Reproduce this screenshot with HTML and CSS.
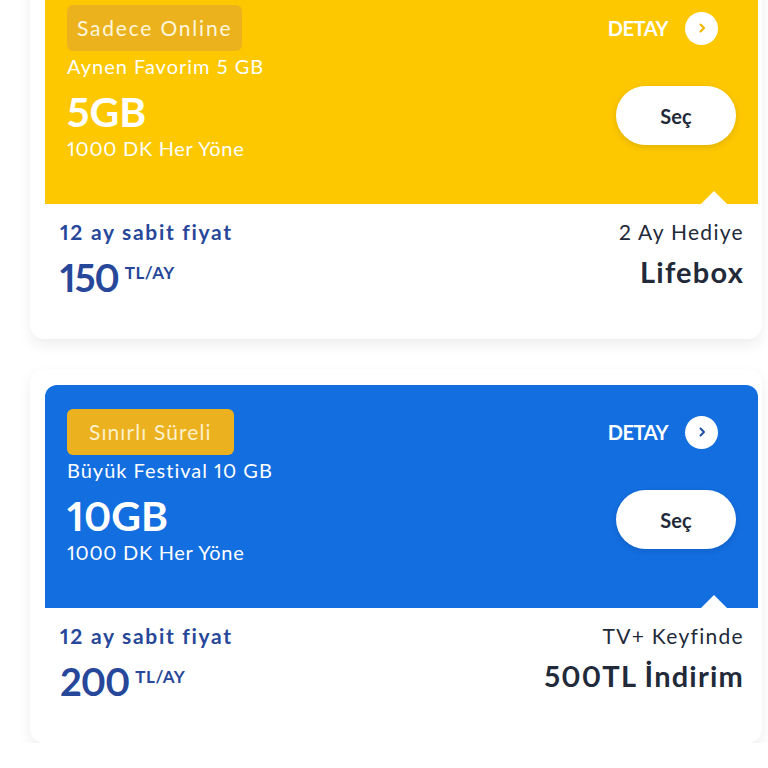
FILE: index.html
```html
<!DOCTYPE html>
<html lang="tr">
<head>
  <meta charset="UTF-8">
  <title>Paketler</title>
  <link rel="stylesheet" href="styles.css">
</head>
<body>

<div class="list">

  <div class="card">
    <div class="head yellow">
      <div class="info">
        <span class="badge">Sadece Online</span>
        <div class="name">Aynen Favorim 5 GB</div>
        <div class="gb">5GB</div>
        <div class="mins">1000 DK Her Yöne</div>
      </div>
      <div class="side">
        <a class="detay" href="#">DETAY
          <span class="circle">
            <svg width="10" height="12" viewBox="0 0 10 12"><path d="M3.5 2.5 L7 6 L3.5 9.5" fill="none" stroke="currentColor" stroke-width="2" stroke-linecap="round" stroke-linejoin="round"/></svg>
          </span>
        </a>
        <button class="sec" type="button">Seç</button>
      </div>
    </div>
    <div class="body">
      <div class="price">
        <div class="fixed">12 ay sabit fiyat</div>
        <div class="amount">150<span class="unit">TL/AY</span></div>
      </div>
      <div class="gift">
        <div class="gift-top">2 Ay Hediye</div>
        <div class="gift-main">Lifebox</div>
      </div>
    </div>
  </div>

  <div class="card">
    <div class="head blue">
      <div class="info">
        <span class="badge">Sınırlı Süreli</span>
        <div class="name">Büyük Festival 10 GB</div>
        <div class="gb">10GB</div>
        <div class="mins">1000 DK Her Yöne</div>
      </div>
      <div class="side">
        <a class="detay" href="#">DETAY
          <span class="circle">
            <svg width="10" height="12" viewBox="0 0 10 12"><path d="M3.5 2.5 L7 6 L3.5 9.5" fill="none" stroke="currentColor" stroke-width="2" stroke-linecap="round" stroke-linejoin="round"/></svg>
          </span>
        </a>
        <button class="sec" type="button">Seç</button>
      </div>
    </div>
    <div class="body">
      <div class="price">
        <div class="fixed">12 ay sabit fiyat</div>
        <div class="amount">200<span class="unit">TL/AY</span></div>
      </div>
      <div class="gift">
        <div class="gift-top">TV+ Keyfinde</div>
        <div class="gift-main">500TL İndirim</div>
      </div>
    </div>
  </div>

</div>

</body>
</html>
```

FILE: styles.css
```css
body {
  margin: 0;
  background: #ffffff;
  font-family: Lato, "Noto Sans", sans-serif;
  font-variant-numeric: proportional-nums;
  overflow: hidden;
}
.list {
  margin-top: -35px;
  padding-left: 30px;
  display: flex;
  flex-direction: column;
  gap: 30px;
}
.card {
  width: 732px;
  height: 374px;
  box-sizing: border-box;
  background: #fff;
  border-radius: 14px;
  box-shadow: 0 6px 14px rgba(0, 0, 0, 0.07);
  padding: 16px 4px 0 15px;
}
.head {
  position: relative;
  height: 223px;
  box-sizing: border-box;
  border-radius: 12px 12px 0 0;
  padding: 24px 22px 0 22px;
  display: flex;
  justify-content: space-between;
  color: #fff;
}
.head::after {
  content: "";
  position: absolute;
  right: 31px;
  bottom: 0;
  border-left: 13px solid transparent;
  border-right: 13px solid transparent;
  border-bottom: 13px solid #fff;
}
.yellow {
  background: #fdc800;
}
.blue {
  background: #136ee0;
}
.info {
  display: flex;
  flex-direction: column;
  align-items: flex-start;
}
.badge {
  height: 46px;
  line-height: 46px;
  border-radius: 6px;
  font-size: 21px;
  letter-spacing: 1.1px;
  padding: 0 22px;
  background: #ecb11e;
  color: #fdf0cc;
}
.yellow .badge {
  padding: 0 10px;
  letter-spacing: 1.8px;
  background: #ebb21d;
  color: #fff6dc;
}
.name {
  font-size: 20px;
  line-height: 26px;
  margin-top: 2px;
  letter-spacing: 1px;
}
.gb {
  font-size: 41px;
  font-weight: 700;
  line-height: 46px;
  margin-top: 10px;
  letter-spacing: 0;
}
.mins {
  font-size: 20px;
  line-height: 26px;
  margin-top: 0;
  letter-spacing: 0.7px;
}
.side {
  display: flex;
  flex-direction: column;
  align-items: flex-end;
}
.detay {
  display: flex;
  align-items: center;
  gap: 17px;
  height: 46px;
  margin-right: 18px;
  color: #fff;
  font-size: 20px;
  font-weight: 700;
  text-decoration: none;
  letter-spacing: -0.5px;
}
.circle {
  width: 33px;
  height: 33px;
  border-radius: 50%;
  background: #fff;
  display: flex;
  align-items: center;
  justify-content: center;
}
.yellow .circle {
  color: #f1b400;
}
.blue .circle {
  color: #1c4fa8;
}
.sec {
  margin-top: 35px;
  width: 120px;
  height: 59px;
  border: none;
  border-radius: 30px;
  background: #fff;
  color: #222a3a;
  font-family: Lato, "Noto Sans", sans-serif;
  font-size: 20px;
  font-weight: 700;
  box-shadow: 0 2px 6px rgba(0, 0, 0, 0.12);
}
.body {
  display: flex;
  justify-content: space-between;
  padding: 14px 14px 0 15px;
}
.fixed {
  color: #27489a;
  font-size: 21px;
  font-weight: 700;
  letter-spacing: 1.7px;
  line-height: 28px;
}
.amount {
  color: #27489a;
  font-size: 38px;
  font-weight: 700;
  line-height: 46px;
  margin-top: 8px;
  letter-spacing: -1px;
}
.unit {
  font-size: 17px;
  vertical-align: top;
  line-height: 38px;
  margin-left: 6px;
  letter-spacing: 0.5px;
}
.gift {
  text-align: right;
  color: #222a3a;
}
.gift-top {
  font-size: 21px;
  line-height: 28px;
  letter-spacing: 1.3px;
}
.gift-main {
  font-size: 29px;
  font-weight: 700;
  line-height: 40px;
  margin-top: 6px;
  letter-spacing: 1.2px;
}
```
